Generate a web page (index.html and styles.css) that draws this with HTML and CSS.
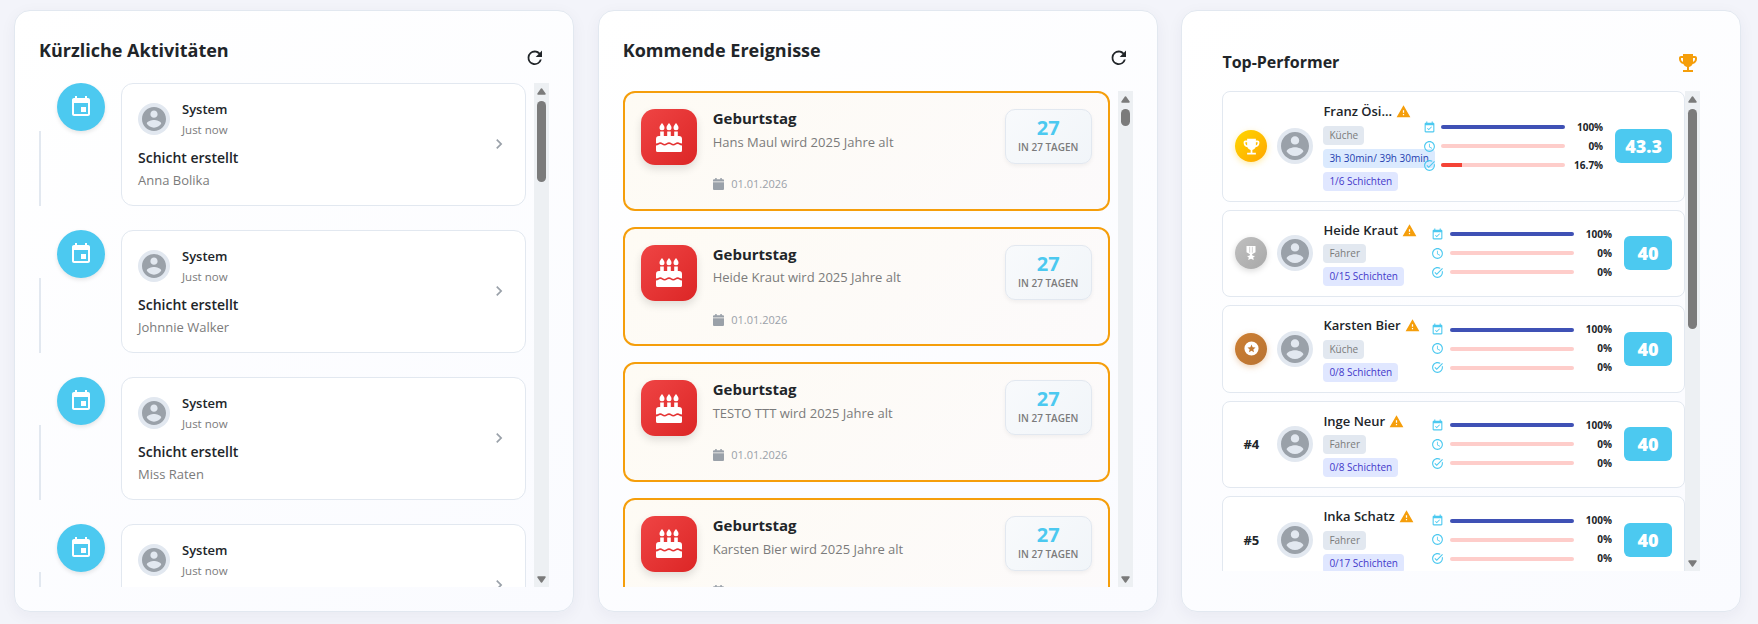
FILE: index.html
```html
<!DOCTYPE html>
<html lang="de">
<head>
<meta charset="utf-8">
<title>Dashboard</title>
<link rel="stylesheet" href="styles.css">
</head>
<body>
<svg class="sprite" width="0" height="0" aria-hidden="true">
  <symbol id="refresh" viewBox="0 0 24 24"><path d="M17.65 6.35C16.2 4.9 14.21 4 12 4a8 8 0 1 0 7.73 10h-2.08A6 6 0 1 1 12 6c1.66 0 3.14.69 4.22 1.78L13 11h7V4z"/></symbol>
  <symbol id="event" viewBox="0 0 24 24"><path d="M17 12h-5v5h5v-5zM16 1v2H8V1H6v2H5c-1.11 0-1.99.9-1.99 2L3 19c0 1.1.89 2 2 2h14c1.1 0 2-.9 2-2V5c0-1.1-.9-2-2-2h-1V1h-2zm3 18H5V8h14v11z"/></symbol>
  <symbol id="person" viewBox="2 2 20 20"><path d="M12 2C6.48 2 2 6.48 2 12s4.48 10 10 10 10-4.48 10-10S17.52 2 12 2zm0 3c1.66 0 3 1.34 3 3s-1.34 3-3 3-3-1.34-3-3 1.34-3 3-3zm0 14.2c-2.5 0-4.71-1.28-6-3.22.03-1.99 4-3.08 6-3.08 1.99 0 5.97 1.09 6 3.08-1.29 1.94-3.5 3.22-6 3.22z"/></symbol>
  <symbol id="chevron" viewBox="0 0 24 24"><path d="M10 6L8.59 7.41 13.17 12l-4.58 4.59L10 18l6-6z"/></symbol>
  <symbol id="cake" viewBox="0 0 26 29"><path d="M6 0c1.400 1.900 2.500 3.200 2.500 4.700a2.500 2.500 0 0 1-5 0C3.500 3.200 4.600 1.900 6 0zM13 0c1.400 1.900 2.500 3.200 2.500 4.700a2.500 2.500 0 0 1-5 0C10.500 3.200 11.600 1.900 13 0zM20 0c1.400 1.900 2.500 3.200 2.500 4.700a2.500 2.500 0 0 1-5 0C17.500 3.200 18.600 1.900 20 0zM4.200 8.500h3.600V13h3.400V8.500h3.600V13h3.400V8.500h3.600V13h1.200a3 3 0 0 1 3 3v4.600c-2.200 0-2.200-1.300-4.300-1.300s-2.200 1.600-4.400 1.600-2.200-1.600-4.300-1.600-2.200 1.600-4.400 1.600-2.200-1.600-4.300-1.600S2.200 20.600 0 20.600V16a3 3 0 0 1 3-3h1.200zM0 22.400c2.600 0 2.600-1.400 4.300-1.400 2 0 2.100 1.600 4.300 1.600s2.300-1.600 4.400-1.600 2.100 1.600 4.300 1.600 2.300-1.600 4.400-1.600c1.800 0 1.800 1.400 4.300 1.400v5.100a1.500 1.500 0 0 1-1.500 1.500h-23A1.500 1.500 0 0 1 0 27.500z"/></symbol>
  <symbol id="day" viewBox="0 0 11 12"><path d="M2.200 0h1.500v1.300h3.600V0h1.500v1.300H10a1 1 0 0 1 1 1v1.200H0V2.300a1 1 0 0 1 1-1h1.200zM0 4.300h11V11a1 1 0 0 1-1 1H1a1 1 0 0 1-1-1z"/></symbol>
  <symbol id="trophy" viewBox="0 0 24 24"><path d="M19 5h-2V3H7v2H5c-1.100 0-2 .9-2 2v1c0 2.550 1.920 4.630 4.390 4.940.63 1.500 1.980 2.630 3.610 2.960V19H7v2h10v-2h-4v-3.100c1.630-.33 2.980-1.460 3.610-2.960C19.080 12.630 21 10.550 21 8V7c0-1.100-.9-2-2-2zM5 8V7h2v3.820C5.840 10.400 5 9.300 5 8zm14 0c0 1.300-.84 2.400-2 2.820V7h2v1z"/></symbol>
  <symbol id="medal" viewBox="0 0 10 14"><path fill-rule="evenodd" d="M.5 0h9v6.200L6 8.300l.6 1.500 2.400.2-1.800 1.600.6 2.400L5 12.800 2.200 14l.6-2.400L1 10l2.400-.2L4 8.300.5 6.200zM3.500.8v5.600l.6.400V.8zM5.900.8v6l.6-.4V.8z"/></symbol>
  <symbol id="star" viewBox="0 0 24 24"><path fill-rule="evenodd" d="M12 2a10 10 0 1 0 0 20 10 10 0 0 0 0-20zm0 4.500l1.600 3.800 4.100.35-3.100 2.700.93 4L12 15.200l-3.530 2.150.93-4-3.100-2.700 4.100-.35z"/></symbol>
  <symbol id="warn" viewBox="0 0 24 24"><path d="M1 21h22L12 2 1 21zm12-3h-2v-2h2v2zm0-4h-2v-4h2v4z"/></symbol>
  <symbol id="planned" viewBox="0 0 24 24"><path d="M16.530 11.060L15.470 10l-4.880 4.880-2.120-2.120-1.060 1.060L10.590 17l5.940-5.940zM19 3h-1V1h-2v2H8V1H6v2H5c-1.110 0-1.990.9-1.990 2L3 19c0 1.100.89 2 2 2h14c1.100 0 2-.9 2-2V5c0-1.100-.9-2-2-2zm0 16H5V8h14v11z"/></symbol>
  <symbol id="clock" viewBox="0 0 24 24"><path d="M11.990 2C6.470 2 2 6.480 2 12s4.470 10 9.990 10C17.520 22 22 17.520 22 12S17.520 2 11.990 2zM12 20c-4.420 0-8-3.580-8-8s3.580-8 8-8 8 3.580 8 8-3.580 8-8 8zm.5-13H11v6l5.250 3.150.75-1.230-4.500-2.670z"/></symbol>
  <symbol id="done" viewBox="0 0 24 24"><path d="M22 5.180L10.590 16.600l-4.240-4.240 1.410-1.410 2.830 2.830 10-10L22 5.180zM19.790 10.220c.13.570.21 1.170.21 1.780 0 4.420-3.580 8-8 8s-8-3.580-8-8 3.580-8 8-8c1.580 0 3.040.46 4.280 1.250l1.440-1.440C16.100 2.670 14.130 2 12 2 6.480 2 2 6.480 2 12s4.480 10 10 10 10-4.480 10-10c0-1.190-.22-2.330-.6-3.390l-1.610 1.610z"/></symbol>
  <symbol id="up" viewBox="0 0 9 7"><path d="M4.500 1L8 6H1z" stroke-width="1.500" stroke-linejoin="round" stroke="#7b7b7b"/></symbol>
</svg>

<main class="board">
  <section class="panel">
    <header class="panel-head head-activity"><h2>Kürzliche Aktivitäten</h2><svg class="reload"><use href="#refresh"/></svg></header>
    <div class="scroller">
      <div class="list activities">
        <article class="activity">
          <i class="line"></i><span class="dot"><svg><use href="#event"/></svg></span>
          <div class="activity-card">
            <div class="activity-body">
              <div class="who"><span class="avatar"><svg><use href="#person"/></svg></span><div><p class="name">System</p><p class="when">Just now</p></div></div>
              <p class="what">Schicht erstellt</p><p class="whom">Anna Bolika</p>
            </div>
            <svg class="chevron"><use href="#chevron"/></svg>
          </div>
        </article>
        <article class="activity">
          <i class="line"></i><span class="dot"><svg><use href="#event"/></svg></span>
          <div class="activity-card">
            <div class="activity-body">
              <div class="who"><span class="avatar"><svg><use href="#person"/></svg></span><div><p class="name">System</p><p class="when">Just now</p></div></div>
              <p class="what">Schicht erstellt</p><p class="whom">Johnnie Walker</p>
            </div>
            <svg class="chevron"><use href="#chevron"/></svg>
          </div>
        </article>
        <article class="activity">
          <i class="line"></i><span class="dot"><svg><use href="#event"/></svg></span>
          <div class="activity-card">
            <div class="activity-body">
              <div class="who"><span class="avatar"><svg><use href="#person"/></svg></span><div><p class="name">System</p><p class="when">Just now</p></div></div>
              <p class="what">Schicht erstellt</p><p class="whom">Miss Raten</p>
            </div>
            <svg class="chevron"><use href="#chevron"/></svg>
          </div>
        </article>
        <article class="activity">
          <i class="line"></i><span class="dot"><svg><use href="#event"/></svg></span>
          <div class="activity-card">
            <div class="activity-body">
              <div class="who"><span class="avatar"><svg><use href="#person"/></svg></span><div><p class="name">System</p><p class="when">Just now</p></div></div>
            </div>
            <svg class="chevron"><use href="#chevron"/></svg>
          </div>
        </article>
      </div>
      <div class="bar"><svg class="arrow"><use href="#up"/></svg><i class="thumb thumb-activity"></i><svg class="arrow down"><use href="#up"/></svg></div>
    </div>
  </section>

  <section class="panel">
    <header class="panel-head head-events"><h2>Kommende Ereignisse</h2><svg class="reload"><use href="#refresh"/></svg></header>
    <div class="scroller">
      <div class="list events">
        <article class="event">
          <span class="tile"><svg><use href="#cake"/></svg></span>
          <div class="event-body"><h3>Geburtstag</h3><p class="desc">Hans Maul wird 2025 Jahre alt</p><p class="date"><svg><use href="#day"/></svg>01.01.2026</p></div>
          <div class="count"><b>27</b><span>IN 27 TAGEN</span></div>
        </article>
        <article class="event">
          <span class="tile"><svg><use href="#cake"/></svg></span>
          <div class="event-body"><h3>Geburtstag</h3><p class="desc">Heide Kraut wird 2025 Jahre alt</p><p class="date"><svg><use href="#day"/></svg>01.01.2026</p></div>
          <div class="count"><b>27</b><span>IN 27 TAGEN</span></div>
        </article>
        <article class="event">
          <span class="tile"><svg><use href="#cake"/></svg></span>
          <div class="event-body"><h3>Geburtstag</h3><p class="desc">TESTO TTT wird 2025 Jahre alt</p><p class="date"><svg><use href="#day"/></svg>01.01.2026</p></div>
          <div class="count"><b>27</b><span>IN 27 TAGEN</span></div>
        </article>
        <article class="event">
          <span class="tile"><svg><use href="#cake"/></svg></span>
          <div class="event-body"><h3>Geburtstag</h3><p class="desc">Karsten Bier wird 2025 Jahre alt</p><p class="date"><svg><use href="#day"/></svg></p></div>
          <div class="count"><b>27</b><span>IN 27 TAGEN</span></div>
        </article>
      </div>
      <div class="bar"><svg class="arrow"><use href="#up"/></svg><i class="thumb thumb-events"></i><svg class="arrow down"><use href="#up"/></svg></div>
    </div>
  </section>

  <section class="panel panel-top">
    <header class="panel-head head-top"><h2>Top-Performer</h2><svg class="cup"><use href="#trophy"/></svg></header>
    <div class="scroller">
      <div class="list ranks">
        <article class="rank">
          <span class="place gold"><svg><use href="#trophy"/></svg></span>
          <span class="avatar large"><svg><use href="#person"/></svg></span>
          <div class="person"><p class="pname">Franz Ösi...<svg><use href="#warn"/></svg></p><span class="chip">Küche</span><span class="chip hours">3h 30min/ 39h 30min</span><span class="chip shifts">1/6 Schichten</span></div>
          <div class="metrics">
            <div class="metric"><svg><use href="#planned"/></svg><div class="track"><i class="full" style="width:100%"></i></div><b>100%</b></div>
            <div class="metric"><svg><use href="#clock"/></svg><div class="track"></div><b>0%</b></div>
            <div class="metric"><svg><use href="#done"/></svg><div class="track"><i class="low" style="width:16.700%"></i></div><b>16.7%</b></div>
          </div>
          <strong class="score">43.3</strong>
        </article>
        <article class="rank">
          <span class="place silver"><svg><use href="#medal"/></svg></span>
          <span class="avatar large"><svg><use href="#person"/></svg></span>
          <div class="person"><p class="pname">Heide Kraut<svg><use href="#warn"/></svg></p><span class="chip">Fahrer</span><span class="chip shifts">0/15 Schichten</span></div>
          <div class="metrics">
            <div class="metric"><svg><use href="#planned"/></svg><div class="track"><i class="full" style="width:100%"></i></div><b>100%</b></div>
            <div class="metric"><svg><use href="#clock"/></svg><div class="track"></div><b>0%</b></div>
            <div class="metric"><svg><use href="#done"/></svg><div class="track"></div><b>0%</b></div>
          </div>
          <strong class="score">40</strong>
        </article>
        <article class="rank">
          <span class="place bronze"><svg><use href="#star"/></svg></span>
          <span class="avatar large"><svg><use href="#person"/></svg></span>
          <div class="person"><p class="pname">Karsten Bier<svg><use href="#warn"/></svg></p><span class="chip">Küche</span><span class="chip shifts">0/8 Schichten</span></div>
          <div class="metrics">
            <div class="metric"><svg><use href="#planned"/></svg><div class="track"><i class="full" style="width:100%"></i></div><b>100%</b></div>
            <div class="metric"><svg><use href="#clock"/></svg><div class="track"></div><b>0%</b></div>
            <div class="metric"><svg><use href="#done"/></svg><div class="track"></div><b>0%</b></div>
          </div>
          <strong class="score">40</strong>
        </article>
        <article class="rank">
          <span class="place">#4</span>
          <span class="avatar large"><svg><use href="#person"/></svg></span>
          <div class="person"><p class="pname">Inge Neur<svg><use href="#warn"/></svg></p><span class="chip">Fahrer</span><span class="chip shifts">0/8 Schichten</span></div>
          <div class="metrics">
            <div class="metric"><svg><use href="#planned"/></svg><div class="track"><i class="full" style="width:100%"></i></div><b>100%</b></div>
            <div class="metric"><svg><use href="#clock"/></svg><div class="track"></div><b>0%</b></div>
            <div class="metric"><svg><use href="#done"/></svg><div class="track"></div><b>0%</b></div>
          </div>
          <strong class="score">40</strong>
        </article>
        <article class="rank">
          <span class="place">#5</span>
          <span class="avatar large"><svg><use href="#person"/></svg></span>
          <div class="person"><p class="pname">Inka Schatz<svg><use href="#warn"/></svg></p><span class="chip">Fahrer</span><span class="chip shifts">0/17 Schichten</span></div>
          <div class="metrics">
            <div class="metric"><svg><use href="#planned"/></svg><div class="track"><i class="full" style="width:100%"></i></div><b>100%</b></div>
            <div class="metric"><svg><use href="#clock"/></svg><div class="track"></div><b>0%</b></div>
            <div class="metric"><svg><use href="#done"/></svg><div class="track"></div><b>0%</b></div>
          </div>
          <strong class="score">40</strong>
        </article>
      </div>
      <div class="bar"><svg class="arrow"><use href="#up"/></svg><i class="thumb thumb-top"></i><svg class="arrow down"><use href="#up"/></svg></div>
    </div>
  </section>
</main>
</body>
</html>
```

FILE: styles.css
```css
* { box-sizing: border-box; }
html, body { height: 100%; }
body {
  margin: 0;
  overflow: hidden;
  background: #f3f4fa;
  color: #212529;
  font-family: "Open Sans", "Noto Sans", sans-serif;
}
h2, h3, p { margin: 0; }
svg { display: block; fill: currentColor; flex: none; }
.sprite { position: absolute; }

.board {
  display: grid;
  grid-template-columns: 560px 560px 559.6px;
  gap: 23.7px;
  height: 611.6px;
  padding: 10px 0 0 14px;
}
.panel {
  display: flex;
  flex-direction: column;
  min-width: 0;
  min-height: 0;
  padding: 24px;
  border: 1px solid #e2e8f0;
  border-radius: 16px;
  background: linear-gradient(145deg, #ffffff 0%, #fafbff 100%);
  box-shadow: 0 4px 16px rgba(30, 40, 80, .05);
}
.panel-top { padding: 40px; }
.panel-head { display: flex; justify-content: space-between; flex: none; }
.head-activity { height: 48px; }
.head-events { height: 56px; }
.head-top { height: 40px; }
h2 { font-size: 18px; font-weight: 700; line-height: 30px; }
.head-top h2 { font-size: 16px; line-height: 22px; }
.reload { width: 21.6px; height: 21.6px; margin: 12px 3px 0 0; }
.cup { width: 24px; height: 24px; color: #f59e0b; }

.scroller { display: flex; flex: 1; min-height: 0; }
.list { flex: 1; min-width: 0; overflow: hidden; display: flex; flex-direction: column; }
.list > * { flex: none; }
.bar { display: flex; flex-direction: column; align-items: center; width: 15px; background: #edf0f3; color: #7b7b7b; }
.arrow { width: 9px; height: 7px; margin: 5px 0 6px; }
.down { margin: auto 0 4px; transform: rotate(180deg); }
.thumb { width: 9px; border-radius: 5px; background: #7b7b7b; }
.thumb-activity { height: 81px; }
.thumb-events { height: 17px; }
.thumb-top { height: 220px; }

.activities { gap: 24px; padding-right: 8px; }
.activity { display: flex; height: 123px; }
.line { width: 2px; margin-top: 48px; background: #e2e8f0; }
.dot {
  display: flex; align-items: center; justify-content: center;
  width: 48px; height: 48px; margin: 0 16px; flex: none;
  border-radius: 50%; background: #4cc9f0; color: #fff;
  box-shadow: 0 2px 4px rgba(0, 0, 0, .1);
}
.dot svg { width: 24px; height: 24px; }
.activity-card {
  display: flex; align-items: center; flex: 1;
  padding: 16px; border: 1px solid #e2e8f0; border-radius: 12px; background: #fff;
}
.activity-body { flex: 1; align-self: stretch; }
.who { display: flex; gap: 12px; align-items: center; height: 38px; }
.avatar {
  display: flex; align-items: center; justify-content: center; flex: none;
  width: 32px; height: 32px; border-radius: 50%; background: #e2e8f0; color: #9aa1a9;
}
.avatar svg { width: 24px; height: 24px; }
.name { font-size: 13px; font-weight: 600; line-height: 19px; }
.when { padding-top: 1px; font-size: 11.500px; line-height: 19px; color: #7b7b7b; }
.what { margin-top: 9px; font-size: 14px; font-weight: 600; line-height: 22px; }
.whom { font-size: 13px; line-height: 22px; color: #7b7b7b; }
.chevron { width: 20px; height: 20px; margin-bottom: 1px; color: #9aa1a9; }

.events { gap: 16px; padding-right: 8px; }
.event {
  display: flex; height: 119.670px; padding: 16px;
  border: 2px solid #f59e0b; border-radius: 12px;
  background: linear-gradient(135deg, #fefbf4, #fcfafb);
}
.tile {
  display: flex; align-items: center; justify-content: center; flex: none;
  width: 56px; height: 56px; border-radius: 14px; color: #fff;
  background: linear-gradient(135deg, #ef4444, #dc2626);
  box-shadow: 0 4px 8px rgba(0, 0, 0, .12);
}
.tile svg { width: 26px; height: 29px; }
.event-body { flex: 1; padding-left: 16px; }
h3 { font-size: 15px; font-weight: 700; line-height: 18px; }
.desc { margin-top: 3.800px; font-size: 13px; line-height: 22px; color: #7b7b7b; }
.date { display: flex; align-items: center; gap: 7.500px; margin-top: 21.200px; height: 20px; font-size: 11px; line-height: 20px; color: #9aa1a9; }
.date svg { width: 11px; height: 12px; }
.count {
  display: flex; flex-direction: column; align-items: center;
  width: 87px; height: 55px; padding-top: 6px;
  border: 1px solid #e2e8f0; border-radius: 10px;
  background: linear-gradient(135deg, #f8fafc, #f1f5f9);
  box-shadow: 0 2px 4px rgba(0, 0, 0, .05);
}
.count b { font-size: 20px; font-weight: 700; line-height: 24px; color: #4cc9f0; }
.count span { font-size: 10px; font-weight: 600; line-height: 15px; color: #7b7b7b; }

.ranks { gap: 8px; }
.rank {
  display: flex; align-items: center; padding: 10px 12px;
  border: 1px solid #e2e8f0; border-radius: 8px; background: #fff;
}
.place {
  display: flex; align-items: center; justify-content: center; flex: none;
  width: 32px; height: 32px; margin-right: 10px; border-radius: 50%;
  font-size: 13px; font-weight: 700;
}
.place svg { width: 21px; height: 21px; color: #fff; }
.gold { background: linear-gradient(135deg, #ffd700, #ffa500); box-shadow: 0 2px 6px rgba(255, 200, 0, .35); }
.silver { background: linear-gradient(135deg, #c0c0c0, #a8a8a8); box-shadow: 0 2px 6px rgba(0, 0, 0, .15); }
.silver svg { width: 10px; height: 14px; }
.bronze { background: linear-gradient(135deg, #cd7f32, #b87333); box-shadow: 0 2px 6px rgba(205, 127, 50, .35); }
.bronze svg { width: 17px; height: 17px; }
.large { width: 36px; height: 36px; margin-right: 10px; }
.large svg { width: 28px; height: 28px; }
.person { display: flex; flex: 1; flex-direction: column; align-items: flex-start; gap: 4px; min-width: 0; }
.pname { display: flex; align-items: center; gap: 4px; height: 19.500px; font-size: 13px; font-weight: 600; line-height: 19.500px; white-space: nowrap; }
.pname svg { width: 15px; height: 15px; color: #f59e0b; }
.chip { height: 19px; padding: 0 6px; border-radius: 4px; background: #e2e8f0; color: #7b7b7b; font-size: 10px; line-height: 19px; white-space: nowrap; }
.hours { background: #dbeafe; color: #1e40af; }
.shifts { background: #e0e7ff; color: #4338ca; }
.metrics { display: flex; flex-direction: column; gap: 4px; flex: none; width: 180.500px; position: relative; }
.metric { display: flex; align-items: center; height: 15px; }
.metric svg { width: 13px; height: 13px; color: #4cc9f0; }
.track { width: 124px; height: 4px; margin-left: 5.500px; border-radius: 2px; background: #fecdca; overflow: hidden; }
.track i { display: block; height: 4px; }
.full { background: #3f51b5; }
.low { background: #f44336; }
.metric b { flex: 1; font-size: 10px; font-weight: 700; text-align: right; line-height: 15px; }
.score {
  height: 34px; margin-left: 12px; padding: 0 10px; min-width: 48px; border-radius: 6px; text-align: center;
  background: #4cc9f0; color: #fff; font-size: 18px; font-weight: 800; line-height: 34px;
}
```
